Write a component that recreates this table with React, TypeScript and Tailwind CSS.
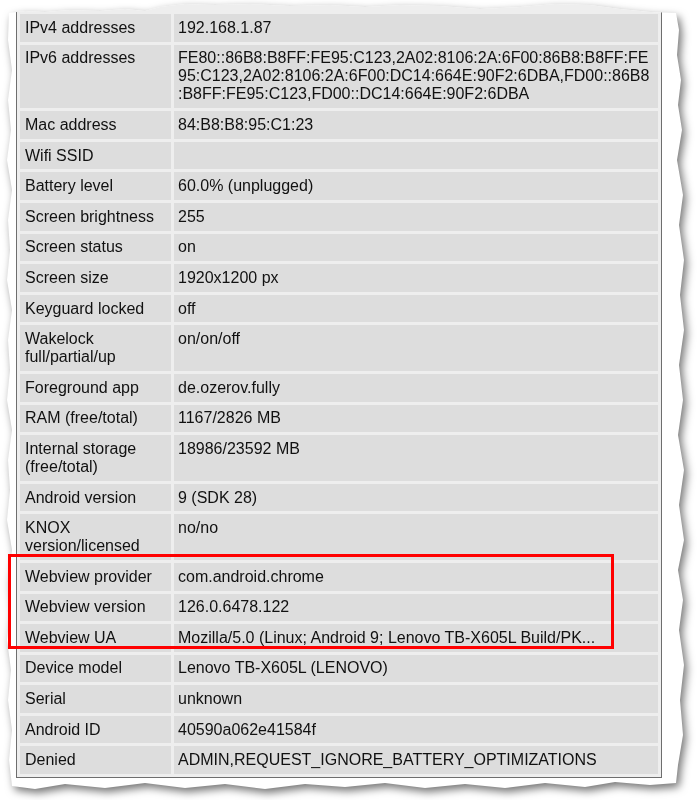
import React from "react";

const rows: [string, string][] = [
  ["IPv4 addresses", "192.168.1.87"],
  [
    "IPv6 addresses",
    "FE80::86B8:B8FF:FE95:C123,2A02:8106:2A:6F00:86B8:B8FF:FE95:C123,2A02:8106:2A:6F00:DC14:664E:90F2:6DBA,FD00::86B8:B8FF:FE95:C123,FD00::DC14:664E:90F2:6DBA",
  ],
  ["Mac address", "84:B8:B8:95:C1:23"],
  ["Wifi SSID", ""],
  ["Battery level", "60.0% (unplugged)"],
  ["Screen brightness", "255"],
  ["Screen status", "on"],
  ["Screen size", "1920x1200 px"],
  ["Keyguard locked", "off"],
  ["Wakelock full/partial/up", "on/on/off"],
  ["Foreground app", "de.ozerov.fully"],
  ["RAM (free/total)", "1167/2826 MB"],
  ["Internal storage (free/total)", "18986/23592 MB"],
  ["Android version", "9 (SDK 28)"],
  ["KNOX version/licensed", "no/no"],
  ["Webview provider", "com.android.chrome"],
  ["Webview version", "126.0.6478.122"],
  ["Webview UA", "Mozilla/5.0 (Linux; Android 9; Lenovo TB-X605L Build/PK..."],
  ["Device model", "Lenovo TB-X605L (LENOVO)"],
  ["Serial", "unknown"],
  ["Android ID", "40590a062e41584f"],
  ["Denied", "ADMIN,REQUEST_IGNORE_BATTERY_OPTIMIZATIONS"],
];

// torn paper outline
const torn =
  "M9 13 L25 11 L45 12 L70 10 L100 11 L125 9 L145 11 L160 7 L185 4 L215 5 L250 4 L290 6 L330 5 L365 7 L400 5 L440 6 L480 9 L520 7 L555 4 L590 5 L620 9 L650 12 L676 13 " +
  "L679 30 L677 55 L681 80 L678 105 L682 130 L677 160 L683 195 L679 225 L684 260 L680 295 L684 330 L679 365 L683 400 L678 435 L684 470 L679 505 L684 540 L678 570 L683 600 L679 630 L684 665 L680 700 L683 735 L678 765 L676 783 " +
  "L650 785 L615 782 L585 787 L545 783 L505 788 L465 784 L425 788 L385 783 L345 787 L305 784 L265 789 L225 784 L185 788 L145 783 L105 788 L65 784 L35 789 L12 786 " +
  "L9 760 L12 730 L8 700 L11 670 L7 640 L10 610 L8 580 L12 550 L7 520 L10 490 L8 460 L12 430 L7 400 L10 370 L8 340 L12 310 L7 280 L10 250 L8 220 L12 190 L7 160 L11 130 L8 100 L12 70 L8 40 Z";

export default function App() {
  return (
    <div className="relative h-[800px] w-[697px] overflow-hidden bg-white font-['Liberation_Sans',Arial,sans-serif] text-[16px] text-[#111]">
      <svg width="0" height="0" className="absolute">
        <defs>
          <clipPath id="torn" clipPathUnits="userSpaceOnUse">
            <path d={torn} />
          </clipPath>
        </defs>
      </svg>

      <div className="[filter:drop-shadow(3px_4px_4px_rgba(0,0,0,0.55))]">
        <div className="h-[800px] bg-white pl-[16px] [clip-path:url(#torn)]">
          <div className="w-[646px] border-x border-b border-[#6e6e6e] bg-[#eeeeee] pt-[11px]">
            <table className="w-full table-fixed border-separate border-spacing-[3px]">
              <colgroup>
                <col className="w-[151px]" />
                <col />
              </colgroup>
              <tbody>
                {rows.map(([label, value]) => (
                  <tr key={label}>
                    <td className="bg-[#dddddd] px-[5px] py-[4.8px] align-top leading-[18px]">
                      {label}
                    </td>
                    <td className="bg-[#dddddd] pl-[4px] pr-[7px] py-[4.8px] align-top leading-[18px] [overflow-wrap:anywhere]">
                      {value}
                    </td>
                  </tr>
                ))}
              </tbody>
            </table>
          </div>
        </div>
      </div>

      <div className="absolute left-[8px] top-[554px] h-[95px] w-[606px] border-[3px] border-[#ff0000]" />
    </div>
  );
}
